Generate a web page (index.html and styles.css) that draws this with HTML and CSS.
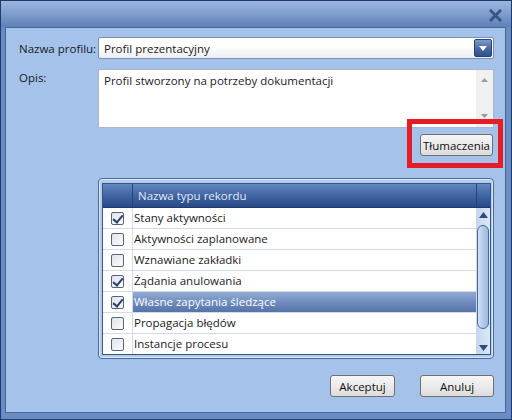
FILE: index.html
```html
<!DOCTYPE html>
<html>
	<head>
		<title>Profil</title>
		<meta charset="UTF-8">
		<link rel="stylesheet" href="styles.css">
	</head>
	<body>
		<div class="window">
			<div class="titlebar">
				<svg class="close" width="13" height="13" viewBox="0 0 13 13">
					<path d="M2 2 L11 11 M11 2 L2 11" stroke="#3a5686" stroke-width="3" stroke-linecap="square"/>
				</svg>
			</div>

			<div class="panel">
				<div class="field">
					<label class="label">Nazwa profilu:</label>
					<div class="combo">
						<span class="combo-text">Profil prezentacyjny</span>
						<span class="combo-button">
							<svg width="8" height="5" viewBox="0 0 8 5"><path d="M0 0 L8 0 L4 5 Z" fill="#ffffff"/></svg>
						</span>
					</div>
				</div>

				<div class="field field-top">
					<label class="label label-top">Opis:</label>
					<div class="textarea">
						<div class="textarea-text">Profil stworzony na potrzeby dokumentacji</div>
						<div class="textarea-scroll">
							<svg width="7" height="4" viewBox="0 0 7 4"><path d="M0 4 L7 4 L3.5 0 Z" fill="#9a9a9a"/></svg>
							<svg width="7" height="4" viewBox="0 0 7 4"><path d="M0 0 L7 0 L3.5 4 Z" fill="#9a9a9a"/></svg>
						</div>
					</div>
				</div>

				<div class="translate-row">
					<div class="highlight-wrap">
						<button class="btn btn-translate">Tłumaczenia</button>
						<span class="highlight"></span>
					</div>
				</div>

				<div class="list-frame">
					<div class="grid">
						<div class="grid-head">
							<div class="head-check"></div>
							<div class="head-name">Nazwa typu rekordu</div>
							<div class="head-scroll"></div>
						</div>
						<div class="grid-body">
							<div class="rows">
								<div class="row"><div class="cell-check"><span class="checkbox checked"></span></div><div class="cell-name">Stany aktywności</div></div>
								<div class="row"><div class="cell-check"><span class="checkbox"></span></div><div class="cell-name">Aktywności zaplanowane</div></div>
								<div class="row"><div class="cell-check"><span class="checkbox"></span></div><div class="cell-name">Wznawiane zakładki</div></div>
								<div class="row"><div class="cell-check"><span class="checkbox checked"></span></div><div class="cell-name">Żądania anulowania</div></div>
								<div class="row selected"><div class="cell-check"><span class="checkbox checked"></span></div><div class="cell-name">Własne zapytania śledzące</div></div>
								<div class="row"><div class="cell-check"><span class="checkbox"></span></div><div class="cell-name">Propagacja błędów</div></div>
								<div class="row"><div class="cell-check"><span class="checkbox"></span></div><div class="cell-name">Instancje procesu</div></div>
							</div>
							<div class="vscroll">
								<svg class="arrow-up" width="9" height="6" viewBox="0 0 9 6"><path d="M0 6 L9 6 L4.5 0 Z" fill="#2c4a80"/></svg>
								<div class="thumb"></div>
								<svg class="arrow-down" width="9" height="6" viewBox="0 0 9 6"><path d="M0 0 L9 0 L4.5 6 Z" fill="#2c4a80"/></svg>
							</div>
						</div>
					</div>
				</div>

				<div class="actions">
					<button class="btn btn-ok">Akceptuj</button>
					<button class="btn btn-cancel">Anuluj</button>
				</div>
			</div>
		</div>
	</body>
</html>
```

FILE: styles.css
```css
body {
	margin: 0;
	font-family: "Open Sans", "Noto Sans", sans-serif;
	font-size: 11.5px;
	color: #1b1b1b;
}

.window {
	width: 512px;
	height: 420px;
	box-sizing: border-box;
	border: 1px solid #1c3b73;
	background: #6b8cc2;
	display: flex;
	flex-direction: column;
}

.titlebar {
	height: 26px;
	flex: none;
	background: linear-gradient(to bottom, #9cb6de, #7f9dcd 50%, #5e7fb6);
	display: flex;
	justify-content: flex-end;
	align-items: flex-start;
}

.close {
	margin: 8px 9px 0 0;
}

.panel {
	flex: 1;
	margin: 0 5px 6px 4px;
	border: 1px solid #46679c;
	background: #a4c2ea;
	padding: 9px 11px 0 13px;
	display: flex;
	flex-direction: column;
}

.field {
	display: flex;
	align-items: center;
}

.field-top {
	align-items: flex-start;
	margin-top: 10px;
}

.label {
	width: 79px;
	flex: none;
}

.label-top {
	padding-top: 1px;
}

.combo {
	flex: 1;
	height: 22px;
	box-sizing: border-box;
	border: 1px solid #7a8fb3;
	border-radius: 2px;
	background: linear-gradient(to bottom, #ffffff, #ffffff 40%, #eceef3);
	display: flex;
	align-items: center;
	padding: 0 1px 0 5px;
}

.combo-text {
	flex: 1;
}

.combo-button {
	width: 18px;
	height: 18px;
	box-sizing: border-box;
	border: 1px solid #23427a;
	border-radius: 2px;
	background: linear-gradient(to bottom, #7b9acb, #4b6da6 50%, #2e4f8c);
	display: flex;
	align-items: center;
	justify-content: center;
}

.textarea {
	flex: 1;
	height: 59px;
	box-sizing: border-box;
	border: 1px solid #a9b8cf;
	background: #ffffff;
	display: flex;
}

.textarea-text {
	flex: 1;
	padding: 3px 0 0 5px;
}

.textarea-scroll {
	width: 17px;
	background: #f0f0f0;
	display: flex;
	flex-direction: column;
	justify-content: space-between;
	align-items: center;
	padding: 8px 0 9px;
	box-sizing: border-box;
}

.translate-row {
	display: flex;
	justify-content: flex-end;
	margin-top: 6px;
	padding-right: 1px;
}

.highlight-wrap {
	position: relative;
}

.highlight {
	position: absolute;
	left: -13px;
	right: -10px;
	top: -15px;
	bottom: -12px;
	border: 5px solid #e81c24;
}

.btn {
	height: 22px;
	box-sizing: border-box;
	border: 1px solid #707070;
	border-radius: 3px;
	background: linear-gradient(to bottom, #f5f5f5, #ebebeb 50%, #dcdcdc);
	font-family: inherit;
	font-size: 11.5px;
	color: #111111;
	padding: 0;
}

.btn-translate {
	width: 73px;
}

.list-frame {
	margin: 22px 0 0 79px;
	height: 181px;
	box-sizing: border-box;
	border: 1px solid #4a6aa0;
	border-radius: 4px;
	box-shadow: inset 0 0 0 1px #dce7f6;
	background: #b4cbec;
	padding: 4px 2px 3px 3px;
}

.grid {
	height: 100%;
	box-sizing: border-box;
	border: 1px solid #33538a;
	background: #ffffff;
	display: flex;
	flex-direction: column;
}

.grid-head {
	height: 23px;
	flex: none;
	display: flex;
	background: linear-gradient(to bottom, #6487c0, #4065a2 50%, #274987);
	color: #e2eaf6;
	border-bottom: 1px solid #1d3a6e;
}

.head-check {
	width: 29px;
	border-right: 1px solid #23437a;
}

.head-name {
	flex: 1;
	padding: 4px 0 0 5px;
	border-right: 1px solid #23437a;
}

.head-scroll {
	width: 13px;
}

.grid-body {
	flex: 1;
	display: flex;
	overflow: hidden;
}

.rows {
	flex: 1;
	overflow: hidden;
}

.row {
	height: 21px;
	box-sizing: border-box;
	display: flex;
	border-bottom: 1px solid #d4dbe6;
}

.cell-check {
	width: 29px;
	border-right: 1px solid #d4dbe6;
	display: flex;
	align-items: center;
	justify-content: center;
}

.cell-name {
	flex: 1;
	padding: 2px 0 0 1px;
}

.row.selected .cell-name {
	background: linear-gradient(to bottom, #93acd4, #6f8dbe 50%, #5574a9);
	color: #ffffff;
}

.checkbox {
	width: 13px;
	height: 13px;
	box-sizing: border-box;
	border: 1px solid #55657f;
	border-radius: 2px;
	background: linear-gradient(135deg, #dfe3e9, #fbfbfc);
	display: block;
	position: relative;
}

.checkbox.checked::after {
	content: "";
	position: absolute;
	left: 3px;
	top: 0px;
	width: 4px;
	height: 8px;
	border: solid #2c4170;
	border-width: 0 2px 2px 0;
	transform: rotate(40deg);
}

.vscroll {
	width: 14px;
	flex: none;
	background: linear-gradient(to right, #c4d6ee, #dce7f5);
	display: flex;
	flex-direction: column;
	align-items: center;
	padding: 4px 0 3px;
	box-sizing: border-box;
}

.thumb {
	width: 12px;
	height: 104px;
	margin: 7px 0 0;
	box-sizing: border-box;
	border: 1px solid #4a6899;
	border-radius: 6px;
	background: linear-gradient(to right, #d3e1f3, #afc6e8 60%, #9db8e0);
}

.arrow-down {
	margin-top: auto;
}

.actions {
	display: flex;
	justify-content: flex-end;
	gap: 25px;
	margin-top: 16px;
}

.btn-ok {
	width: 65px;
}

.btn-cancel {
	width: 74px;
}
```
